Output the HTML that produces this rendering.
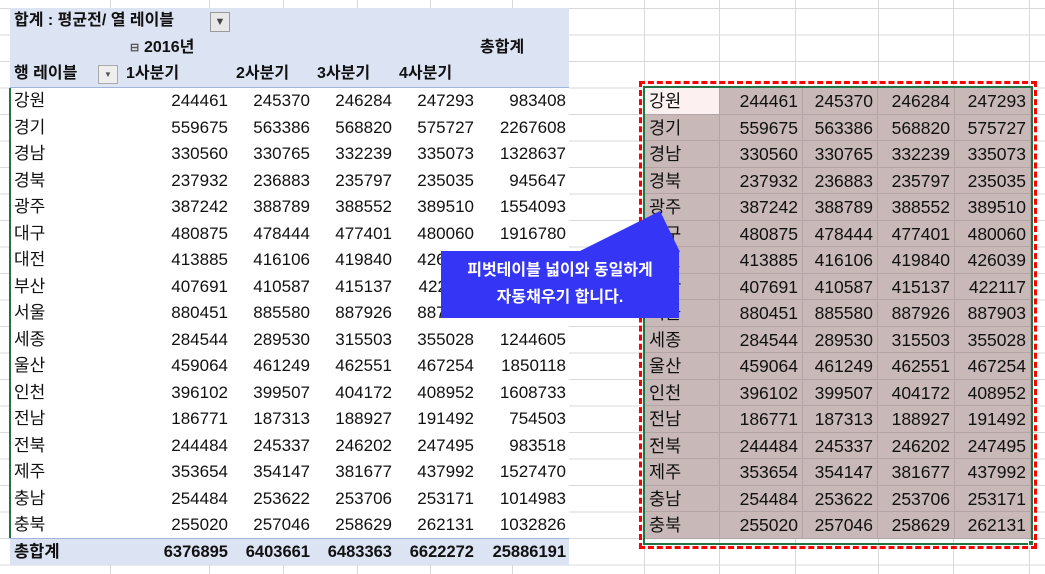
<!DOCTYPE html>
<html><head><meta charset="utf-8"><style>
*{margin:0;padding:0;box-sizing:border-box}
body{width:1045px;height:574px;overflow:hidden;background:#fff;position:relative;font-family:"Liberation Sans","Noto Sans CJK KR",sans-serif;color:#111;
background-image:repeating-linear-gradient(to bottom,#d9d9d9 0,#d9d9d9 1px,transparent 1px,transparent 26.5px);background-position:0 8px}
.v{position:absolute;top:0;height:574px;width:1px;background:#d9d9d9}
.pv{position:absolute;left:10px;width:559px;background:#fff}
.hd{position:absolute;left:10px;width:559px;background:#dce3f3}
.r{position:absolute;left:10px;width:559px;height:26.5px;font-size:17px;line-height:26.5px}
.r span{position:absolute;top:0}
.r .l{left:4px}
.r .a{right:calc(559px - 218px)}
.r .b{right:calc(559px - 300px)}
.r .c{right:calc(559px - 382px)}
.r .d{right:calc(559px - 464px)}
.r .e{right:3px}
.rt{position:absolute;left:645px;width:386px;height:26.5px;font-size:17.5px;line-height:26.5px}
.rt div{position:absolute;top:0;height:26.5px;background:#c8b8b8;border-right:1px solid #b3a5a5;border-bottom:1px solid #b3a5a5;text-align:right;padding-right:4px}
.rt .l{left:0;width:75px;text-align:left;padding-left:4px}
.rt .a{left:75px;width:83px}
.rt .b{left:158px;width:75px}
.rt .c{left:233px;width:77px}
.rt .d{left:310px;width:76px}
</style></head><body>
<div class="v" style="left:110px"></div><div class="v" style="left:209px"></div><div class="v" style="left:283px"></div><div class="v" style="left:357px"></div><div class="v" style="left:430px"></div><div class="v" style="left:512px"></div><div class="v" style="left:644px"></div><div class="v" style="left:719px"></div><div class="v" style="left:795px"></div><div class="v" style="left:878px"></div><div class="v" style="left:953px"></div><div class="v" style="left:1029px"></div>

<div class="hd" style="top:8px;height:80px;border-bottom:1px solid #9fb3dc"></div>
<div class="pv" style="top:88px;height:450px;border-left:2px solid #217346;left:9px;width:560px"></div>
<div class="hd" style="top:538px;height:27px;border-top:1px solid #9fb3dc"></div>

<div class="r" style="top:8px;font-weight:bold;font-size:16px"><span class="l">합계 : 평균전/ 열 레이블</span></div>
<div style="position:absolute;left:210px;top:12px;width:20px;height:20px;border:1px solid #999;background:#e8e8e8;font-size:11px;text-align:center;line-height:18px;color:#444">▼</div>
<div class="r" style="top:34.5px;font-weight:bold;font-size:16px"><span style="left:120px;font-size:11px;color:#555">⊟</span><span style="left:134px">2016년</span><span style="left:470px">총합계</span></div>
<div class="r" style="top:61px;font-weight:bold;font-size:16px"><span class="l">행 레이블</span><span style="left:88px;top:4px;width:20px;height:19px;border:1px solid #aaa;background:#eee;font-size:8px;line-height:17px;text-align:center;color:#555">▼</span><span style="left:116px">1사분기</span><span style="left:226px">2사분기</span><span style="left:307px">3사분기</span><span style="left:389px">4사분기</span></div>

<div class="r" style="top:88px"><span class="l">강원</span><span class="a">244461</span><span class="b">245370</span><span class="c">246284</span><span class="d">247293</span><span class="e">983408</span></div>
<div class="r" style="top:114.5px"><span class="l">경기</span><span class="a">559675</span><span class="b">563386</span><span class="c">568820</span><span class="d">575727</span><span class="e">2267608</span></div>
<div class="r" style="top:141px"><span class="l">경남</span><span class="a">330560</span><span class="b">330765</span><span class="c">332239</span><span class="d">335073</span><span class="e">1328637</span></div>
<div class="r" style="top:167.5px"><span class="l">경북</span><span class="a">237932</span><span class="b">236883</span><span class="c">235797</span><span class="d">235035</span><span class="e">945647</span></div>
<div class="r" style="top:194px"><span class="l">광주</span><span class="a">387242</span><span class="b">388789</span><span class="c">388552</span><span class="d">389510</span><span class="e">1554093</span></div>
<div class="r" style="top:220.5px"><span class="l">대구</span><span class="a">480875</span><span class="b">478444</span><span class="c">477401</span><span class="d">480060</span><span class="e">1916780</span></div>
<div class="r" style="top:247px"><span class="l">대전</span><span class="a">413885</span><span class="b">416106</span><span class="c">419840</span><span class="d">426039</span><span class="e">1675870</span></div>
<div class="r" style="top:273.5px"><span class="l">부산</span><span class="a">407691</span><span class="b">410587</span><span class="c">415137</span><span class="d">422117</span><span class="e">1655532</span></div>
<div class="r" style="top:300px"><span class="l">서울</span><span class="a">880451</span><span class="b">885580</span><span class="c">887926</span><span class="d">887903</span><span class="e">3541860</span></div>
<div class="r" style="top:326.5px"><span class="l">세종</span><span class="a">284544</span><span class="b">289530</span><span class="c">315503</span><span class="d">355028</span><span class="e">1244605</span></div>
<div class="r" style="top:353px"><span class="l">울산</span><span class="a">459064</span><span class="b">461249</span><span class="c">462551</span><span class="d">467254</span><span class="e">1850118</span></div>
<div class="r" style="top:379.5px"><span class="l">인천</span><span class="a">396102</span><span class="b">399507</span><span class="c">404172</span><span class="d">408952</span><span class="e">1608733</span></div>
<div class="r" style="top:406px"><span class="l">전남</span><span class="a">186771</span><span class="b">187313</span><span class="c">188927</span><span class="d">191492</span><span class="e">754503</span></div>
<div class="r" style="top:432.5px"><span class="l">전북</span><span class="a">244484</span><span class="b">245337</span><span class="c">246202</span><span class="d">247495</span><span class="e">983518</span></div>
<div class="r" style="top:459px"><span class="l">제주</span><span class="a">353654</span><span class="b">354147</span><span class="c">381677</span><span class="d">437992</span><span class="e">1527470</span></div>
<div class="r" style="top:485.5px"><span class="l">충남</span><span class="a">254484</span><span class="b">253622</span><span class="c">253706</span><span class="d">253171</span><span class="e">1014983</span></div>
<div class="r" style="top:512px"><span class="l">충북</span><span class="a">255020</span><span class="b">257046</span><span class="c">258629</span><span class="d">262131</span><span class="e">1032826</span></div>
<div class="r" style="top:538.5px;font-weight:bold;font-size:16.5px"><span class="l">총합계</span><span class="a">6376895</span><span class="b">6403661</span><span class="c">6483363</span><span class="d">6622272</span><span class="e">25886191</span></div>

<div class="rt" style="top:88px"><div class="l" style="background:#fcf0f0">강원</div><div class="a">244461</div><div class="b">245370</div><div class="c">246284</div><div class="d">247293</div></div>
<div class="rt" style="top:114.5px"><div class="l">경기</div><div class="a">559675</div><div class="b">563386</div><div class="c">568820</div><div class="d">575727</div></div>
<div class="rt" style="top:141px"><div class="l">경남</div><div class="a">330560</div><div class="b">330765</div><div class="c">332239</div><div class="d">335073</div></div>
<div class="rt" style="top:167.5px"><div class="l">경북</div><div class="a">237932</div><div class="b">236883</div><div class="c">235797</div><div class="d">235035</div></div>
<div class="rt" style="top:194px"><div class="l">광주</div><div class="a">387242</div><div class="b">388789</div><div class="c">388552</div><div class="d">389510</div></div>
<div class="rt" style="top:220.5px"><div class="l">대구</div><div class="a">480875</div><div class="b">478444</div><div class="c">477401</div><div class="d">480060</div></div>
<div class="rt" style="top:247px"><div class="l">대전</div><div class="a">413885</div><div class="b">416106</div><div class="c">419840</div><div class="d">426039</div></div>
<div class="rt" style="top:273.5px"><div class="l">부산</div><div class="a">407691</div><div class="b">410587</div><div class="c">415137</div><div class="d">422117</div></div>
<div class="rt" style="top:300px"><div class="l">서울</div><div class="a">880451</div><div class="b">885580</div><div class="c">887926</div><div class="d">887903</div></div>
<div class="rt" style="top:326.5px"><div class="l">세종</div><div class="a">284544</div><div class="b">289530</div><div class="c">315503</div><div class="d">355028</div></div>
<div class="rt" style="top:353px"><div class="l">울산</div><div class="a">459064</div><div class="b">461249</div><div class="c">462551</div><div class="d">467254</div></div>
<div class="rt" style="top:379.5px"><div class="l">인천</div><div class="a">396102</div><div class="b">399507</div><div class="c">404172</div><div class="d">408952</div></div>
<div class="rt" style="top:406px"><div class="l">전남</div><div class="a">186771</div><div class="b">187313</div><div class="c">188927</div><div class="d">191492</div></div>
<div class="rt" style="top:432.5px"><div class="l">전북</div><div class="a">244484</div><div class="b">245337</div><div class="c">246202</div><div class="d">247495</div></div>
<div class="rt" style="top:459px"><div class="l">제주</div><div class="a">353654</div><div class="b">354147</div><div class="c">381677</div><div class="d">437992</div></div>
<div class="rt" style="top:485.5px"><div class="l">충남</div><div class="a">254484</div><div class="b">253622</div><div class="c">253706</div><div class="d">253171</div></div>
<div class="rt" style="top:512px"><div class="l">충북</div><div class="a">255020</div><div class="b">257046</div><div class="c">258629</div><div class="d">262131</div></div>

<div style="position:absolute;left:643px;top:86px;width:390px;height:459px;border:2px solid #217346"></div>
<div style="position:absolute;left:1028px;top:540px;width:6px;height:6px;background:#217346;border:1px solid #fff"></div>
<div style="position:absolute;left:639px;top:81px;width:398px;height:468px;border:3px dashed #f00"></div>

<svg style="position:absolute;left:0;top:0" width="1045" height="574"><polygon points="578,252 660,211 680,252" fill="#3535f5"/></svg>
<div style="position:absolute;left:441px;top:251px;width:238px;height:67px;background:#3535f5;color:#fff;font-weight:bold;font-size:16px;text-align:center;line-height:27px;padding-top:6px">피벗테이블 넓이와 동일하게<br>자동채우기 합니다.</div>
</body></html>
